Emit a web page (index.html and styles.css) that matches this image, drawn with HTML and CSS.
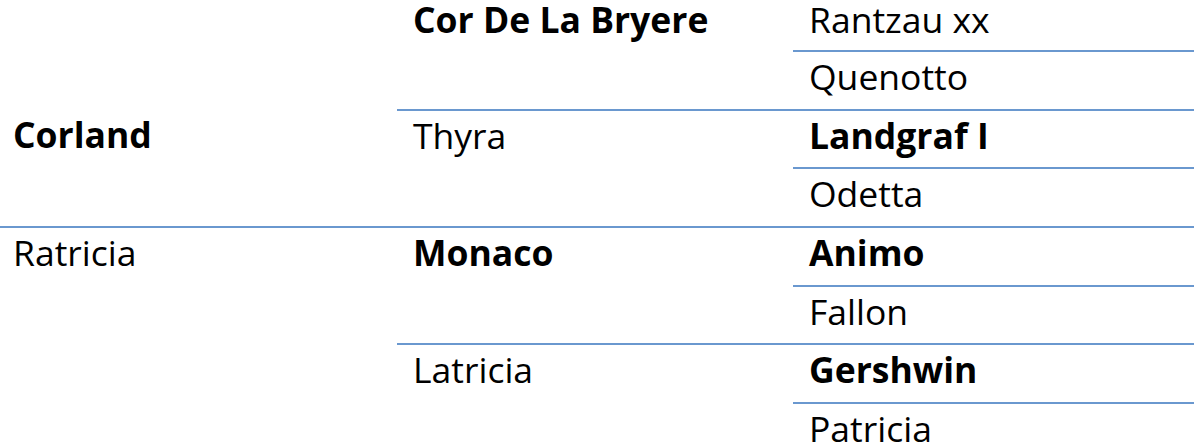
FILE: index.html
```html
<!DOCTYPE html>
<html>
<head>
<meta charset="utf-8">
<link rel="stylesheet" href="styles.css">
</head>
<body>
<div class="pedigree">
  <div class="cell c1 r1-3 blank"></div>
  <div class="cell c1 r3-5 first-col bold">Corland</div>
  <div class="cell c1 r5-9 first-col line">Ratricia</div>

  <div class="cell c2 r1-3 bold">Cor De La Bryere</div>
  <div class="cell c2 r3-5 line">Thyra</div>
  <div class="cell c2 r5-7 line bold">Monaco</div>
  <div class="cell c2 r7-9 line">Latricia</div>

  <div class="cell c3 r1">Rantzau xx</div>
  <div class="cell c3 r2 line">Quenotto</div>
  <div class="cell c3 r3 line bold">Landgraf I</div>
  <div class="cell c3 r4 line">Odetta</div>
  <div class="cell c3 r5 line bold">Animo</div>
  <div class="cell c3 r6 line">Fallon</div>
  <div class="cell c3 r7 line bold">Gershwin</div>
  <div class="cell c3 r8 line">Patricia</div>
</div>
</body>
</html>
```

FILE: styles.css
```css
html, body {
  margin: 0;
  padding: 0;
  background: #ffffff;
  overflow: hidden;
}

.pedigree {
  display: grid;
  grid-template-columns: 397px 396px 1fr;
  grid-template-rows: 56px repeat(7, 58.67px);
  margin-top: -5px;
  width: 1194px;
  font-family: "Open Sans", "Noto Sans", sans-serif;
  font-size: 35.5px;
  line-height: 48px;
  color: #000000;
}

.cell {
  padding: 0 16px;
  box-sizing: border-box;
  white-space: nowrap;
}

.first-col {
  padding-left: 13px;
}

.line {
  border-top: 2px solid #6a98cf;
  margin-top: -1px;
}

.bold {
  font-weight: 700;
}

.c1 { grid-column: 1; }
.c2 { grid-column: 2; }
.c3 { grid-column: 3; }

.r1-3 { grid-row: 1 / 3; }
.r3-5 { grid-row: 3 / 5; }
.r5-7 { grid-row: 5 / 7; }
.r7-9 { grid-row: 7 / 9; }
.r5-9 { grid-row: 5 / 9; }

.r1 { grid-row: 1; }
.r2 { grid-row: 2; }
.r3 { grid-row: 3; }
.r4 { grid-row: 4; }
.r5 { grid-row: 5; }
.r6 { grid-row: 6; }
.r7 { grid-row: 7; }
.r8 { grid-row: 8; }
```
